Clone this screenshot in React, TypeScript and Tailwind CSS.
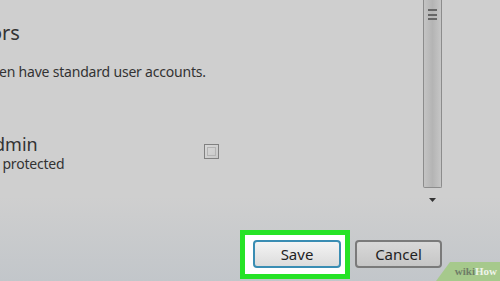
export default function App() {
   return (
      <div
         className="relative flex h-[281px] w-[500px] flex-col overflow-hidden bg-gradient-to-b from-[#cfcfcf] from-70% to-[#c2c6ca] text-[#333]"
         style={{ fontFamily: '"Noto Sans", "Open Sans", sans-serif' }}
      >
         <div className="flex h-[212px]">
            <div className="flex w-[423px] flex-col">
               <div className="-ml-[10px] mt-[19px] text-[20px] leading-[28px]">
                  ors
               </div>
               <div className="mt-[16px] -ml-[1px] text-[14px] leading-[18px] tracking-[-0.2px]">
                  en have standard user accounts.
               </div>
               <div className="mt-[52px] flex items-start">
                  <div className="w-[204px]">
                     <div className="-ml-[6px] text-[18px] leading-[22px]">
                        dmin
                     </div>
                     <div className="-ml-[1px] text-[14px] leading-[18px] tracking-[-0.2px]">
                        &nbsp;protected
                     </div>
                  </div>
                  <div className="mt-[11px] h-[15px] w-[15px] border border-[#808080] bg-gradient-to-br from-[#d8d8d8] to-[#c8c8c8] p-[2px]">
                     <div className="h-full w-full border border-[#b4b4b4]" />
                  </div>
               </div>
            </div>
            <div className="flex w-[19px] flex-col items-center">
               <div className="flex h-[188px] w-[19px] justify-center rounded-b-[2px] border border-t-0 border-[#8c8c8c] bg-gradient-to-r from-[#c4c4c4] via-[#b4b4b4] to-[#c6c6c6]">
                  <div className="mt-[9px] flex h-[11px] w-[9px] flex-col justify-between">
                     <div className="h-[2px] bg-[#666]" />
                     <div className="h-[2px] bg-[#666]" />
                     <div className="h-[2px] bg-[#666]" />
                  </div>
               </div>
               <svg className="mt-[10px]" width="7" height="4" viewBox="0 0 7 4">
                  <path d="M0 0 H7 L3.5 4 Z" fill="#333" />
               </svg>
            </div>
         </div>
         <div className="mt-[18px] flex items-start">
            <div className="ml-[240px] flex h-[49px] w-[110px] border-[5px] border-[#26e326] bg-white pl-[8px] pt-[5px]">
               <button className="h-[28px] w-[88px] rounded-[4px] border-2 border-[#3a8db3] bg-gradient-to-b from-[#f4f4f4] to-[#dcdcdc] text-[15px] text-[#222]">
                  Save
               </button>
            </div>
            <button className="ml-[5px] mt-[10px] h-[28px] w-[87px] rounded-[4px] border-2 border-[#7a7a7a] bg-gradient-to-b from-[#d8d8d8] to-[#c6c6c6] text-[15px] text-[#222]">
               Cancel
            </button>
         </div>
         <div className="absolute bottom-0 right-0 flex h-[19px] w-[64px] items-center justify-end bg-[#a6c98c] pr-[3px] [clip-path:polygon(14px_0,100%_0,100%_100%,0_100%)]">
            <span
               className="text-[11px] font-bold leading-none"
               style={{ fontFamily: '"Liberation Serif", serif' }}
            >
               <span className="text-[#6f7d68]">wiki</span>
               <span className="text-[#eef3ea]">How</span>
            </span>
         </div>
      </div>
   );
}
